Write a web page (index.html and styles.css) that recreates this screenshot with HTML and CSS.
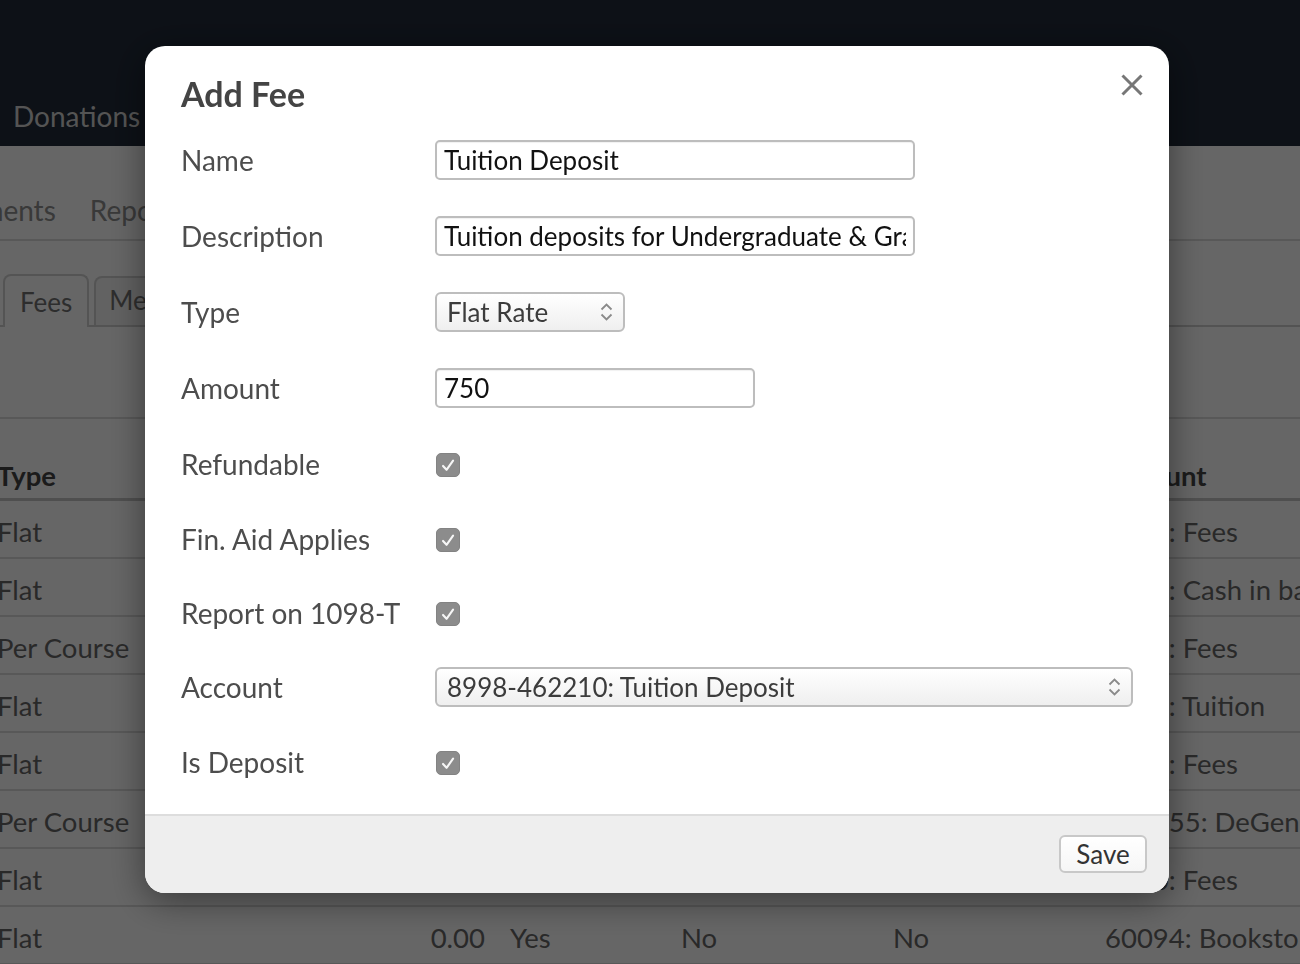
FILE: index.html
```html
<!DOCTYPE html>
<html lang="en">
<head>
<meta charset="utf-8">
<title>Add Fee</title>
<link rel="stylesheet" href="styles.css">
</head>
<body>
<div class="page">
  <header class="topbar"><span class="top-item">Donations</span></header>
  <nav class="subnav"><span>Payments</span><span>Reports</span></nav>
  <div class="tabs">
    <div class="tab active">Fees</div>
    <div class="tab">Messages</div>
  </div>
  <div class="toolbar"></div>
  <div class="table">
    <div class="tr th">
      <div class="c1">Type</div><div class="c2">Amount</div><div class="c3">Refundable</div><div class="c4">Fin. Aid</div><div class="c5">1098-T</div><div class="c6">Account</div>
    </div>
    <div class="tr"><div class="c1">Flat</div><div class="c2">25.00</div><div class="c3">No</div><div class="c4">No</div><div class="c5">No</div><div class="c6">4010: Fees</div></div>
    <div class="tr"><div class="c1">Flat</div><div class="c2">100.00</div><div class="c3">Yes</div><div class="c4">No</div><div class="c5">No</div><div class="c6">1010: Cash in bank</div></div>
    <div class="tr"><div class="c1">Per Course</div><div class="c2">50.00</div><div class="c3">No</div><div class="c4">Yes</div><div class="c5">Yes</div><div class="c6">4020: Fees</div></div>
    <div class="tr"><div class="c1">Flat</div><div class="c2">300.00</div><div class="c3">No</div><div class="c4">Yes</div><div class="c5">Yes</div><div class="c6">4000: Tuition</div></div>
    <div class="tr"><div class="c1">Flat</div><div class="c2">15.00</div><div class="c3">No</div><div class="c4">No</div><div class="c5">No</div><div class="c6">4030: Fees</div></div>
    <div class="tr"><div class="c1">Per Course</div><div class="c2">35.00</div><div class="c3">No</div><div class="c4">Yes</div><div class="c5">No</div><div class="c6">600155: DeGennaro</div></div>
    <div class="tr"><div class="c1">Flat</div><div class="c2">10.00</div><div class="c3">No</div><div class="c4">No</div><div class="c5">No</div><div class="c6">4040: Fees</div></div>
    <div class="tr"><div class="c1">Flat</div><div class="c2">0.00</div><div class="c3">Yes</div><div class="c4">No</div><div class="c5">No</div><div class="c6">60094: Bookstore</div></div>
  </div>
</div>

<div class="overlay"></div>

<div class="modal">
  <div class="modal-body">
    <div class="modal-head">
      <h2 class="modal-title">Add Fee</h2>
      <svg class="close" width="22" height="22" viewBox="0 0 22 22"><path d="M1.5 1.5 L20.5 20.5 M20.5 1.5 L1.5 20.5" stroke="#777" stroke-width="3" fill="none"/></svg>
    </div>
    <div class="form">
      <div class="row"><label>Name</label><input class="input w-480" value="Tuition Deposit"></div>
      <div class="row"><label>Description</label><input class="input w-480" value="Tuition deposits for Undergraduate &amp; Graduate students"></div>
      <div class="row"><label>Type</label>
        <div class="select w-190"><span>Flat Rate</span><svg width="13" height="22" viewBox="0 0 13 22"><path d="M1.5 8.5 L6.5 3.5 L11.5 8.5 M1.5 13.5 L6.5 18.5 L11.5 13.5" fill="none" stroke="#8a8a8a" stroke-width="1.8"/></svg></div>
      </div>
      <div class="row"><label>Amount</label><input class="input w-320" value="750"></div>
      <div class="row"><label>Refundable</label><div class="check"><svg width="23" height="23" viewBox="0 0 23 23"><path d="M6.3 12 L10 16 L16.8 6.5" fill="none" stroke="#f6f6f6" stroke-width="2.2" stroke-linecap="round" stroke-linejoin="round"/></svg></div></div>
      <div class="row tight"><label>Fin. Aid Applies</label><div class="check"><svg width="23" height="23" viewBox="0 0 23 23"><path d="M6.3 12 L10 16 L16.8 6.5" fill="none" stroke="#f6f6f6" stroke-width="2.2" stroke-linecap="round" stroke-linejoin="round"/></svg></div></div>
      <div class="row tight"><label>Report on 1098-T</label><div class="check"><svg width="23" height="23" viewBox="0 0 23 23"><path d="M6.3 12 L10 16 L16.8 6.5" fill="none" stroke="#f6f6f6" stroke-width="2.2" stroke-linecap="round" stroke-linejoin="round"/></svg></div></div>
      <div class="row tight"><label>Account</label>
        <div class="select w-698"><span>8998-462210: Tuition Deposit</span><svg width="13" height="22" viewBox="0 0 13 22"><path d="M1.5 8.5 L6.5 3.5 L11.5 8.5 M1.5 13.5 L6.5 18.5 L11.5 13.5" fill="none" stroke="#8a8a8a" stroke-width="1.8"/></svg></div>
      </div>
      <div class="row"><label>Is Deposit</label><div class="check"><svg width="23" height="23" viewBox="0 0 23 23"><path d="M6.3 12 L10 16 L16.8 6.5" fill="none" stroke="#f6f6f6" stroke-width="2.2" stroke-linecap="round" stroke-linejoin="round"/></svg></div></div>
    </div>
  </div>
  <div class="modal-foot">
    <button class="btn">Save</button>
  </div>
</div>
</body>
</html>
```

FILE: styles.css
```css
* { box-sizing: border-box; }
html, body {
  margin: 0;
  padding: 0;
  width: 1300px;
  height: 964px;
  overflow: hidden;
  background: #ffffff;
  font-family: Lato, "Open Sans", "Liberation Sans", sans-serif;
}

.page {
  width: 1300px;
  height: 964px;
  overflow: hidden;
}

.topbar {
  height: 146px;
  background: #212b3a;
  display: flex;
  align-items: flex-end;
  padding: 0 0 10px 13px;
}
.top-item {
  font-size: 28px;
  line-height: 40px;
  color: #d2d2d2;
}

.subnav {
  height: 95px;
  display: flex;
  gap: 34px;
  padding-top: 44px;
  margin-left: -64px;
  border-bottom: 2px solid #dcdcdc;
  font-size: 28px;
  line-height: 40px;
  color: #8e8e8e;
}

.tabs {
  height: 86px;
  display: flex;
  align-items: flex-end;
  padding-left: 3px;
  gap: 5px;
  border-bottom: 2px solid #cfcfcf;
}
.tab {
  height: 51px;
  padding: 0 15px;
  border: 2px solid #d2d2d2;
  border-bottom: none;
  border-radius: 8px 8px 0 0;
  font-size: 26px;
  line-height: 50px;
  color: #727272;
  background: #f4f4f4;
  margin-bottom: -2px;
  white-space: nowrap;
}
.tab.active {
  background: #ffffff;
  height: 53px;
  line-height: 52px;
}
.tab:not(.active) {
  line-height: 44px;
  height: 49px;
  margin-bottom: 0;
  padding-left: 13px;
}

.toolbar {
  height: 92px;
  border-bottom: 2px solid #dcdcdc;
}

.table {
  margin-top: 32px;
  margin-left: -3px;
  font-size: 27.5px;
  color: #686868;
}
.tr {
  display: grid;
  grid-template-columns: 423px 65px 196px 212px 212px 1fr;
  height: 58px;
  padding-top: 4px;
  align-items: center;
  border-bottom: 2px solid #dcdcdc;
  white-space: nowrap;
}
.tr.th {
  height: 50px;
  padding-top: 2px;
  font-weight: 700;
  color: #454545;
  border-bottom: 3px solid #c6c6c6;
}
.tr > div { overflow: hidden; }
.c2 { text-align: right; }
.c3 { padding-left: 25px; }

.overlay {
  position: fixed;
  inset: 0;
  background: rgba(0, 0, 0, 0.6);
}

.modal {
  position: fixed;
  left: 145px;
  top: 46px;
  width: 1024px;
  background: #ffffff;
  border-radius: 20px;
  box-shadow: 0 8px 36px rgba(0, 0, 0, 0.45);
  overflow: hidden;
  display: flex;
  flex-direction: column;
}
.modal-body {
  padding: 28px 36px 14px 36px;
}
.modal-head {
  display: flex;
  justify-content: space-between;
  align-items: flex-start;
}
.modal-title {
  margin: 0;
  font-size: 34px;
  line-height: 40px;
  font-weight: 700;
  color: #444444;
}
.close {
  margin-top: 0;
  margin-right: -10px;
}

.form {
  margin-top: 8px;
  display: flex;
  flex-direction: column;
}
.row {
  height: 76px;
  display: grid;
  grid-template-columns: 254px 1fr;
  align-items: center;
}
.row.tight { height: 74px; }
.row label {
  font-size: 28px;
  color: #4d4d4d;
}

.input {
  height: 40px;
  border: 2px solid #bdbdbd;
  border-radius: 5px;
  padding: 0 7px;
  font-family: Lato, "Open Sans", "Liberation Sans", sans-serif;
  font-size: 26px;
  color: #111111;
  background: #ffffff;
  box-shadow: inset 0 1px 1px rgba(0,0,0,0.06);
}
.w-480 { width: 480px; }
.w-320 { width: 320px; }
.w-190 { width: 190px; }
.w-698 { width: 698px; }

.select {
  height: 40px;
  border: 2px solid #bdbdbd;
  border-radius: 6px;
  padding: 0 10px 0 10px;
  display: flex;
  align-items: center;
  justify-content: space-between;
  font-size: 26px;
  color: #3c3c3c;
  background: linear-gradient(#ffffff, #efefef);
}

.check {
  width: 24px;
  height: 24px;
  margin-left: 1px;
  margin-top: 2px;
  border-radius: 5px;
  background: #8c8c8c;
  border: 1px solid #838383;
  display: flex;
  align-items: center;
  justify-content: center;
}
.check svg { display: block; }

.modal-foot {
  height: 79px;
  border-top: 2px solid #dddddd;
  background: #eeeeee;
  display: flex;
  justify-content: flex-end;
  align-items: center;
  padding: 0 22px 1px 0;
}
.btn {
  width: 88px;
  height: 38px;
  border: 2px solid #c8c8c8;
  border-radius: 6px;
  background: linear-gradient(#ffffff, #f6f6f6);
  font-family: Lato, "Open Sans", "Liberation Sans", sans-serif;
  font-size: 26px;
  color: #333333;
  padding: 0;
}
```
